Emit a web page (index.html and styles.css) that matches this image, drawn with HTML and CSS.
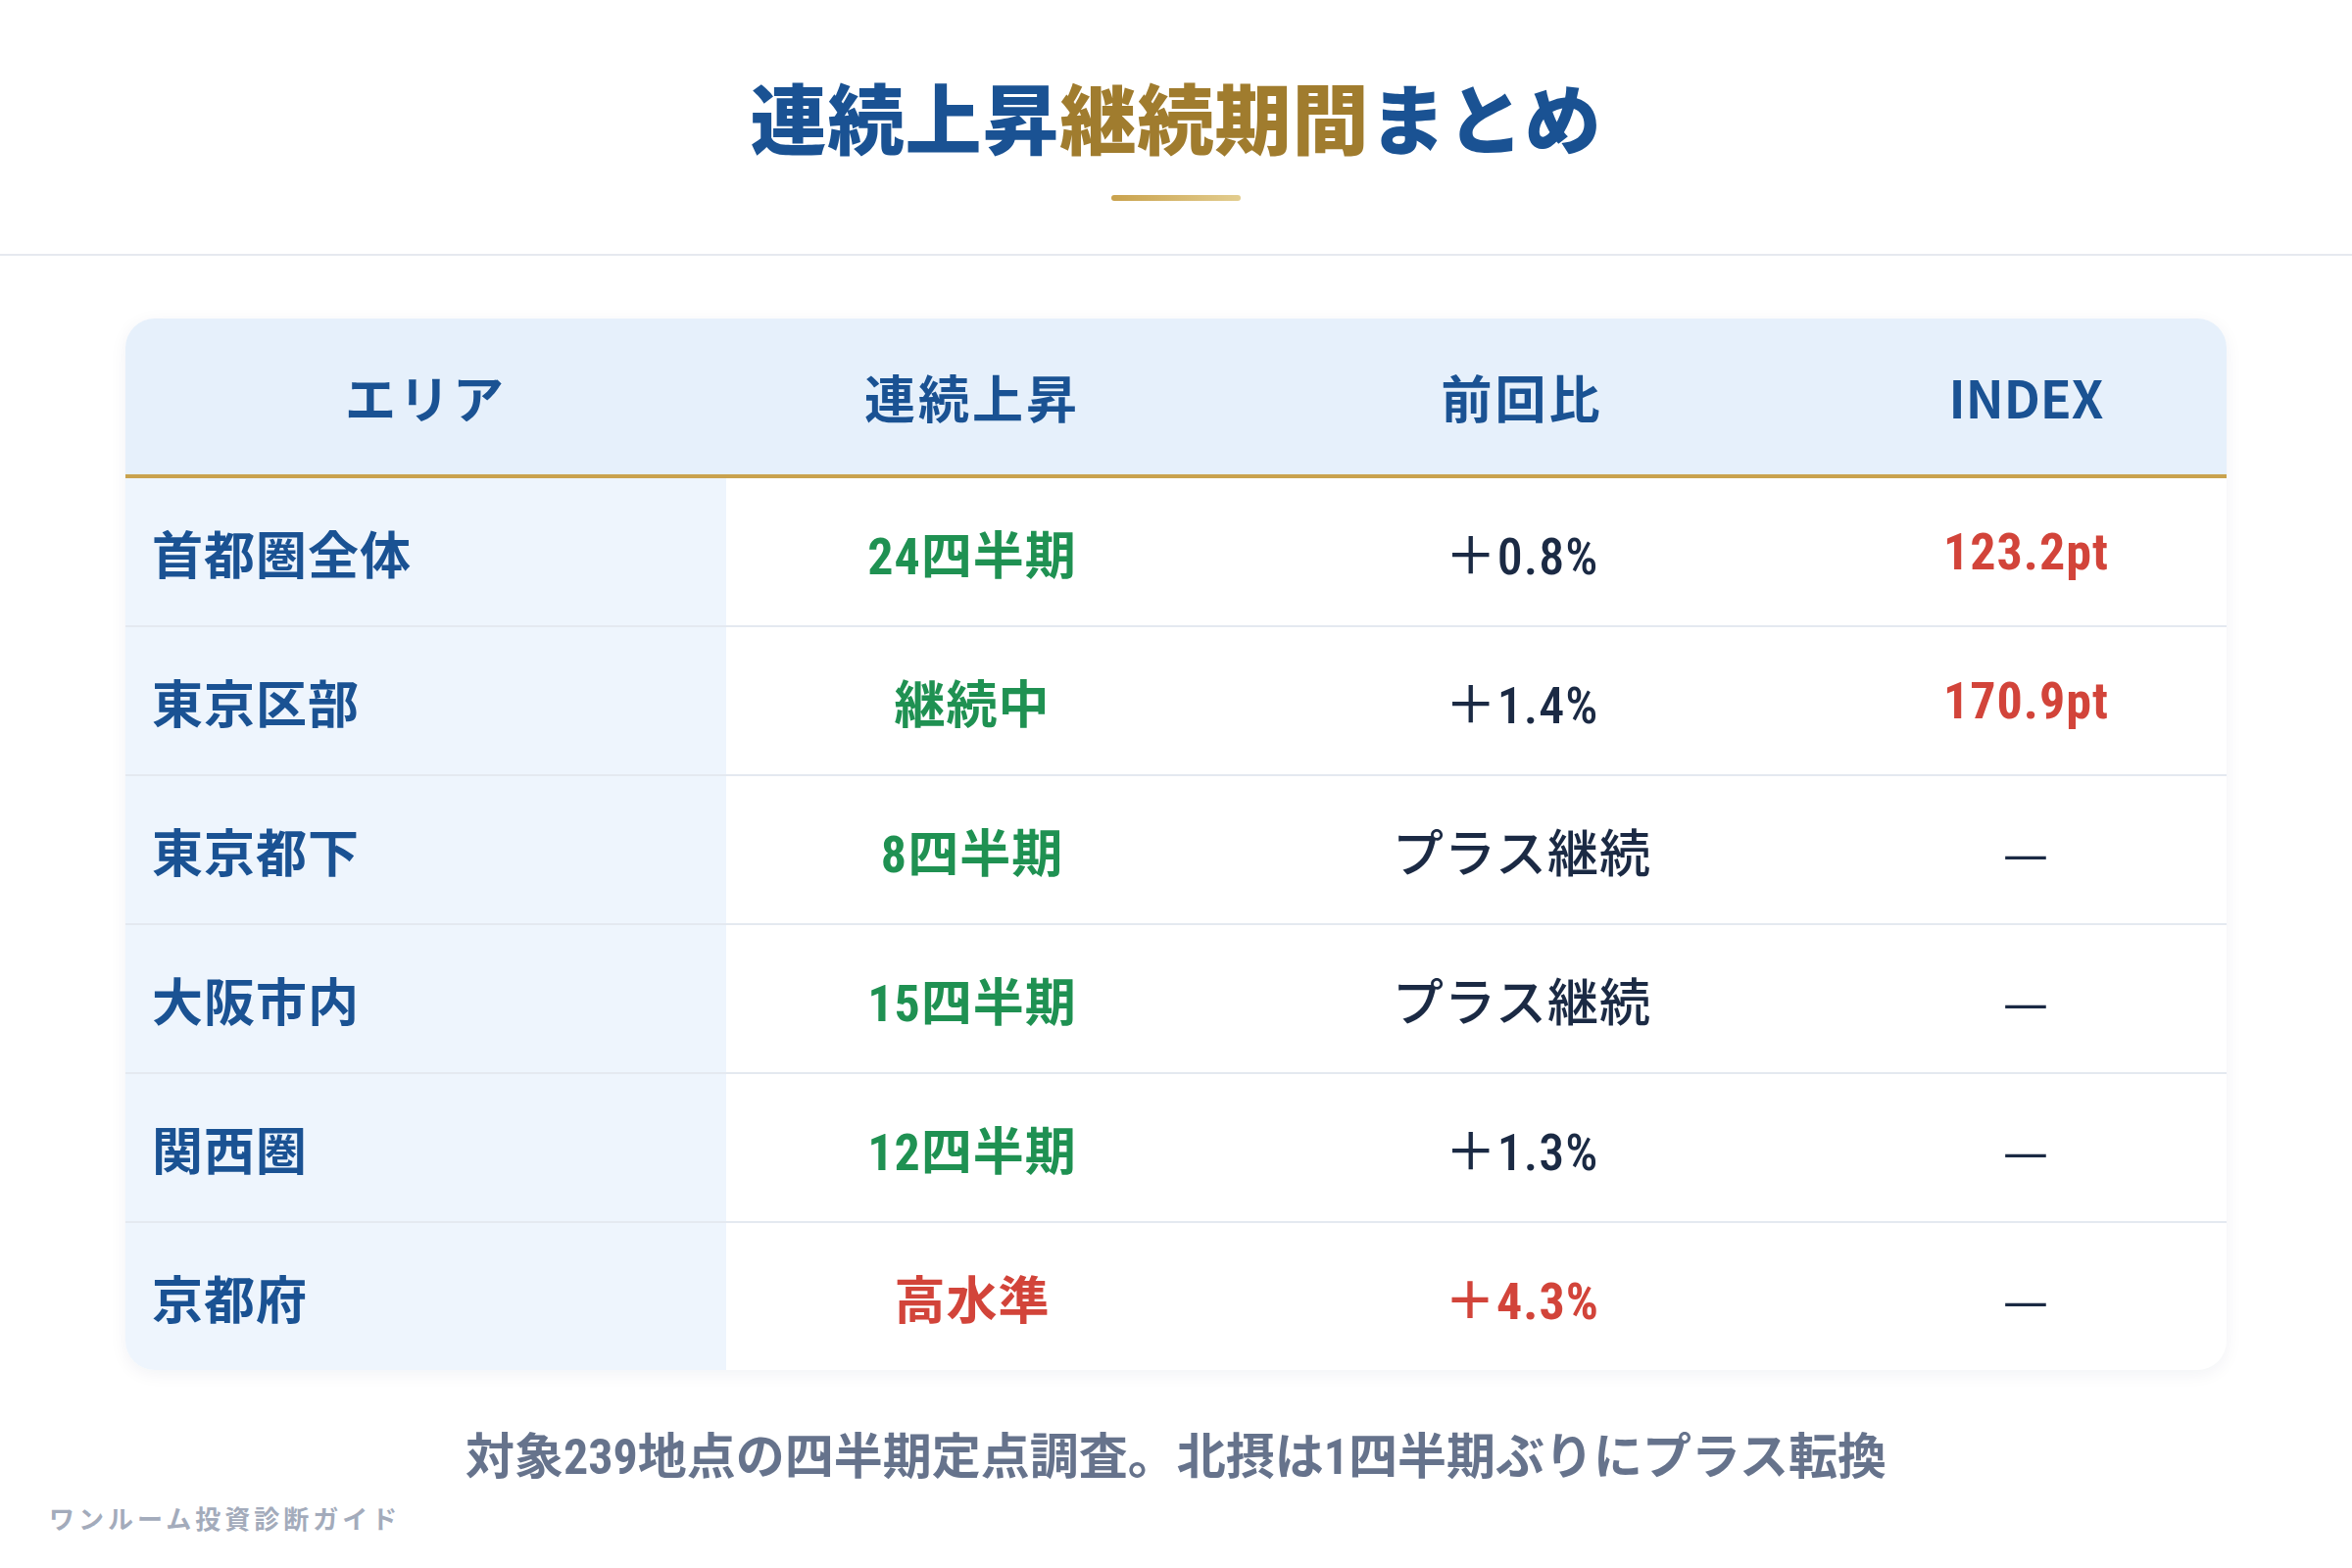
FILE: index.html
```html
<!DOCTYPE html>
<html lang="ja">
<head>
<meta charset="utf-8">
<title>連続上昇継続期間まとめ</title>
<link rel="stylesheet" href="styles.css">
</head>
<body>
<div class="page">
  <header class="head">
    <h1 class="title">連続上昇<span class="gold">継続期間</span>まとめ</h1>
    <div class="bar"></div>
  </header>
  <main class="main">
    <div class="card">
      <table class="tbl">
        <colgroup>
          <col class="c1"><col class="c2"><col class="c3"><col class="c4">
        </colgroup>
        <thead>
          <tr><th>エリア</th><th>連続上昇</th><th>前回比</th><th class="en">INDEX</th></tr>
        </thead>
        <tbody>
          <tr><td class="area">首都圏全体</td><td class="green">24四半期</td><td class="navy">＋0.8%</td><td class="red">123.2pt</td></tr>
          <tr><td class="area">東京区部</td><td class="green">継続中</td><td class="navy">＋1.4%</td><td class="red">170.9pt</td></tr>
          <tr><td class="area">東京都下</td><td class="green">8四半期</td><td class="navy">プラス継続</td><td class="dash">—</td></tr>
          <tr><td class="area">大阪市内</td><td class="green">15四半期</td><td class="navy">プラス継続</td><td class="dash">—</td></tr>
          <tr><td class="area">関西圏</td><td class="green">12四半期</td><td class="navy">＋1.3%</td><td class="dash">—</td></tr>
          <tr><td class="area">京都府</td><td class="red">高水準</td><td class="red">＋4.3%</td><td class="dash">—</td></tr>
        </tbody>
      </table>
    </div>
    <p class="note">対象239地点の四半期定点調査。北摂は1四半期ぶりにプラス転換</p>
  </main>
  <div class="brand">ワンルーム投資診断ガイド</div>
</div>
</body>
</html>
```
FILE: styles.css
```css
html, body {
  margin: 0;
  padding: 0;
  background: #ffffff;
}
body {
  font-family: "Noto Sans CJK JP", "Noto Sans", sans-serif;
  width: 2400px;
  height: 1600px;
  overflow: hidden;
}
.page {
  position: relative;
  width: 2400px;
  height: 1600px;
}
.head {
  padding-top: 72px;
  padding-bottom: 54px;
  border-bottom: 2px solid #e6e9ef;
  display: flex;
  flex-direction: column;
  align-items: center;
}
.title {
  margin: 0;
  font-size: 78px;
  line-height: 92px;
  font-weight: 900;
  letter-spacing: 1px;
  color: #1a5293;
}
.gold {
  color: #a07c2e;
}
.bar {
  margin-top: 35px;
  width: 132px;
  height: 6px;
  border-radius: 3px;
  background: linear-gradient(90deg, #c9a24d, #e3cd8f);
}
.main {
  padding: 64px 128px 0;
}
.card {
  border-radius: 30px;
  overflow: hidden;
  background: #ffffff;
  box-shadow: 0 4px 18px rgba(20, 40, 80, 0.06);
}
.tbl {
  width: 100%;
  border-collapse: collapse;
  table-layout: fixed;
}
.c1 { width: 613px; }
.c2 { width: 502px; }
.c3 { width: 620px; }
.c4 { width: 409px; }
.tbl th {
  height: 159px;
  padding: 0;
  background: #e6f0fb;
  color: #1a5293;
  font-size: 52px;
  font-weight: 700;
  letter-spacing: 3px;
  text-align: center;
  border-bottom: 4px solid #c9a24d;
}
.tbl th.en {
  letter-spacing: 0;
}
.tbl td {
  height: 150px;
  padding: 0;
  text-align: center;
  font-family: "Roboto", "Noto Sans CJK JP", sans-serif;
  font-stretch: 87.5%;
  font-size: 52px;
  font-weight: 700;
  letter-spacing: 1px;
  border-bottom: 2px solid #e4e9f0;
}
.tbl tbody tr:last-child td {
  border-bottom: none;
}
.tbl td.area {
  text-align: left;
  padding-left: 27px;
  background: #eef5fd;
  color: #1a5293;
}
.green { color: #1f9152; }
.red { color: #d2443a; }
.tbl td.navy {
  color: #1b2a44;
  font-weight: 500;
}
.tbl td.red { color: #d2443a; }
.tbl td.dash {
  font-family: "Noto Sans CJK JP", sans-serif;
  color: #1b2a44;
  font-weight: 400;
}
.note {
  margin: 58px 0 0;
  text-align: center;
  font-family: "Roboto", "Noto Sans CJK JP", sans-serif;
  font-stretch: 87.5%;
  font-size: 50px;
  line-height: 62px;
  font-weight: 700;
  color: #66738c;
}
.brand {
  position: absolute;
  left: 50px;
  top: 1532px;
  font-size: 26px;
  line-height: 34px;
  font-weight: 700;
  letter-spacing: 4px;
  color: #a3abbb;
}
```
